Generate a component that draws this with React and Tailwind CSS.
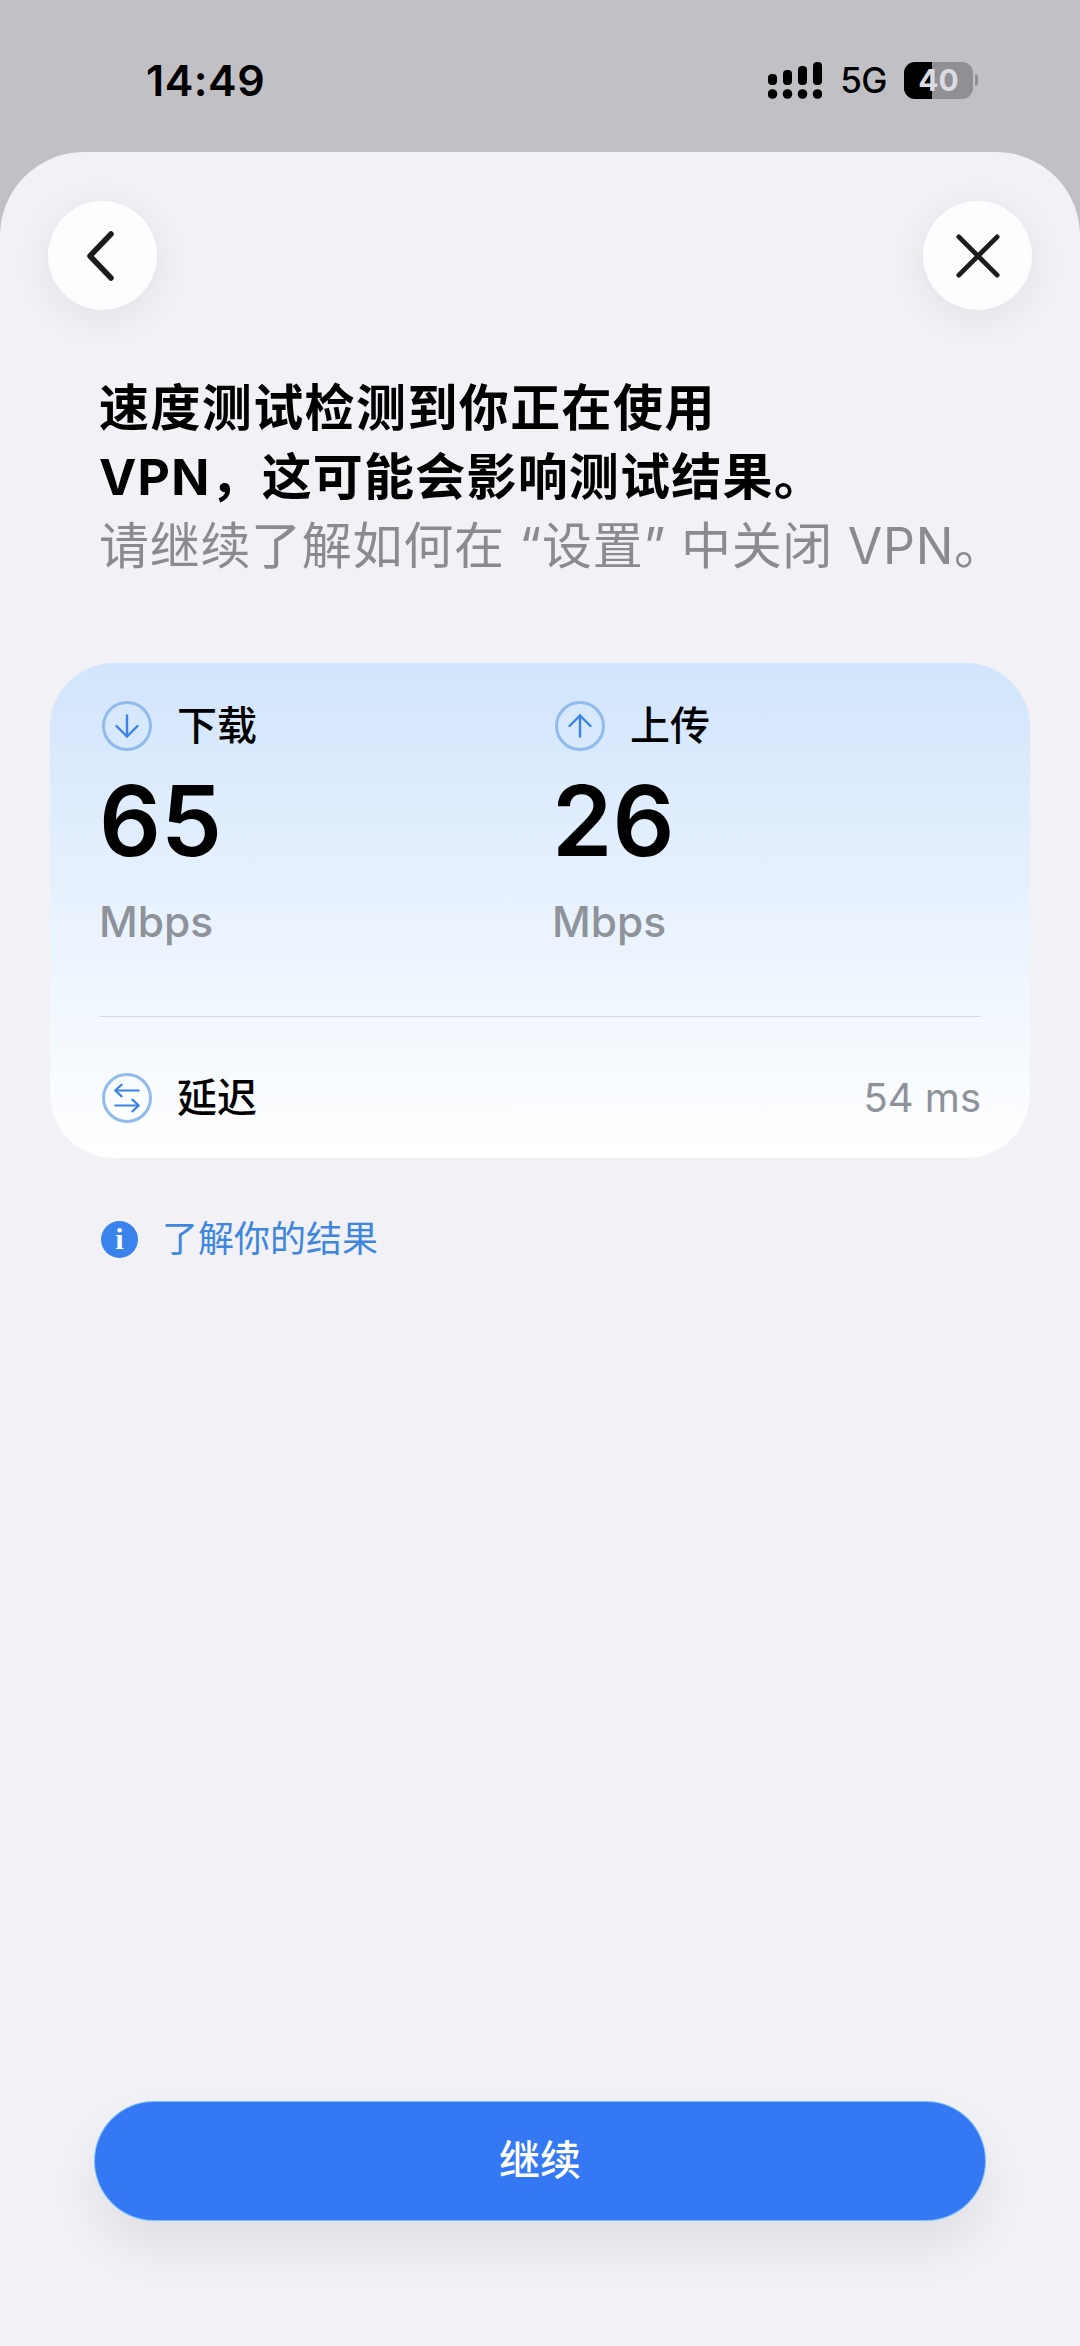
import { ArrowDown, ArrowUp } from 'lucide-react';

const font = "font-['Inter','Noto_Sans_CJK_SC',sans-serif]";

// cell signal bars over the row of dots
const SignalIcon = () => (
  <svg width="54" height="37" viewBox="0 0 54 37" fill="#000">
    <rect x="0" y="12" width="9" height="11" rx="4" />
    <rect x="15" y="8" width="9" height="15" rx="4" />
    <rect x="30" y="4" width="9" height="19" rx="4" />
    <rect x="45" y="0" width="9" height="23" rx="4" />
    <circle cx="4.5" cy="32" r="4.8" />
    <circle cx="19.5" cy="32" r="4.8" />
    <circle cx="34.5" cy="32" r="4.8" />
    <circle cx="49.5" cy="32" r="4.8" />
  </svg>
);

const Battery = () => (
  <div className="flex items-center">
    <div className="relative flex h-[37px] w-[69px] items-center justify-center overflow-hidden rounded-[11px] bg-[#8f8f94]">
      <div className="absolute inset-y-0 left-0 w-[28px] bg-black" />
      <span className="relative text-[30px] leading-none font-bold text-[#dcdce0]">40</span>
    </div>
    <div className="ml-[2px] h-[12px] w-[3px] rounded-r-full bg-[#8f8f94]" />
  </div>
);

const RingIcon = ({ children }) => (
  <div className="flex h-[50px] w-[50px] shrink-0 items-center justify-center rounded-full border-[3px] border-[#90bbec] text-[#3b82e6]">
    {children}
  </div>
);

const SwapIcon = () => (
  <svg width="30" height="30" viewBox="0 0 28 28" fill="none" stroke="currentColor" strokeWidth="2" strokeLinecap="round" strokeLinejoin="round">
    <path d="M25 7H3M9 1.5 3 7l6 5.5" />
    <path d="M3 21h22M19 15.5l6 5.5-6 5.5" />
  </svg>
);

const Speed = ({ icon, label, value }) => (
  <div className="w-[453px] shrink-0">
    <div className="flex items-center gap-[25px] pl-[3px]">
      <RingIcon>{icon}</RingIcon>
      <span className="text-[40px] leading-[48px] font-medium text-black">{label}</span>
    </div>
    <div className="mt-[20px] text-[97px] leading-[100px] font-semibold text-black">{value}</div>
    <div className="mt-[26px] text-[42.5px] leading-[50px] font-medium text-[#8e9299]">Mbps</div>
  </div>
);

const App = () => {
  return (
    <div className={`flex h-[2346px] w-[1080px] flex-col overflow-hidden bg-[#c1c0c5] ${font}`}>
      {/* Status bar */}
      <div className="flex h-[152px] shrink-0 items-start justify-between pr-[102px] pl-[146px] pt-[55px]">
        <span className="text-[43px] leading-[50px] font-semibold tracking-[0.5px] text-black">14:49</span>
        <div className="flex items-center pt-[5px]">
          <SignalIcon />
          <span className="mr-[17px] ml-[18px] text-[35px] leading-[40px] font-medium tracking-[-0.5px] text-black">5G</span>
          <Battery />
        </div>
      </div>

      {/* Sheet */}
      <div className="flex flex-1 flex-col rounded-t-[84px] bg-[#f1f1f6]">
        <div className="flex justify-between px-[48px] pt-[49px]">
          <button className="flex h-[109px] w-[109px] items-center justify-center rounded-full bg-[#fdfdff] shadow-[0_8px_40px_rgba(0,0,0,0.07)]">
            <svg width="32" height="50" viewBox="0 0 32 50" fill="none" stroke="#1c1c1e" strokeWidth="5.5" strokeLinecap="round" strokeLinejoin="round" className="-translate-x-[2px]">
              <path d="M26 3 5 25l21 22" />
            </svg>
          </button>
          <button className="flex h-[109px] w-[109px] items-center justify-center rounded-full bg-[#fdfdff] shadow-[0_8px_40px_rgba(0,0,0,0.07)]">
            <svg width="46" height="46" viewBox="0 0 48 48" fill="none" stroke="#1c1c1e" strokeWidth="5" strokeLinecap="round">
              <path d="M4 4l40 40M44 4 4 44" />
            </svg>
          </button>
        </div>

        <div className="mt-[64px] pl-[99px] text-[50px] leading-[69px]">
          <p className="font-bold tracking-[1.4px] text-black">速度测试检测到你正在使用</p>
          <p className="font-bold tracking-[1.2px] text-black">VPN，这可能会影响测试结果。</p>
          <p className="font-normal tracking-[0.7px] text-[#8a8a8f]">请继续了解如何在 “设置” 中关闭 VPN。</p>
        </div>

        {/* Result card */}
        <div className="mx-[50px] mt-[82px] h-[495px] rounded-[64px] bg-gradient-to-b from-[#d2e5fc] to-white px-[49px] pt-[38px]">
          <div className="flex h-[315px]">
            <Speed icon={<ArrowDown size={36} strokeWidth={1.6} />} label="下载" value="65" />
            <Speed icon={<ArrowUp size={36} strokeWidth={1.6} />} label="上传" value="26" />
          </div>
          <div className="h-[1px] bg-[#d4dbe6]" />
          <div className="mt-[56px] flex items-center justify-between">
            <div className="flex items-center gap-[25px] pl-[3px]">
              <RingIcon>
                <SwapIcon />
              </RingIcon>
              <span className="text-[40px] leading-[48px] font-medium text-black">延迟</span>
            </div>
            <span className="text-[40px] leading-[48px] text-[#8e9299]">54 ms</span>
          </div>
        </div>

        <div className="mt-[58px] flex items-center gap-[24px] pl-[101px]">
          <div className="flex h-[37px] w-[37px] items-center justify-center rounded-full bg-[#3a82ec] font-['Liberation_Serif',serif] text-[30px] leading-none font-bold text-white">
            i
          </div>
          <span className="text-[36px] leading-[46px] text-[#3f86df]">了解你的结果</span>
        </div>

        {/* Continue */}
        <div className="mt-auto px-[95px] pb-[126px]">
          <button className="flex h-[118px] w-full items-center justify-center rounded-full bg-[#3478f3] text-[41px] font-medium text-white shadow-[0_0_0_1px_#7cc0fb,0_26px_50px_rgba(0,0,0,0.08)]">
            继续
          </button>
        </div>
      </div>
    </div>
  );
};

export default App;
